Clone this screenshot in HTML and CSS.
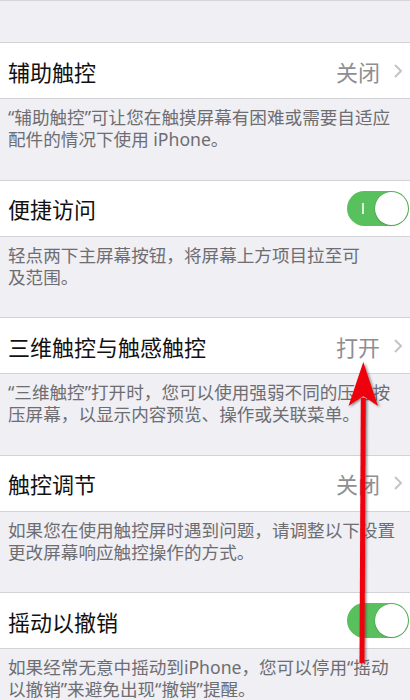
FILE: index.html
```html
<!DOCTYPE html>
<html lang="zh-CN">
<head>
<meta charset="utf-8">
<title>触控</title>
<link rel="stylesheet" href="styles.css">
</head>
<body>
<div class="page">
  <div class="top-gap"></div>

  <div class="row">
    <span class="title">辅助触控</span>
    <span class="value">关闭</span>
    <svg class="chev" viewBox="0 0 8 14"><path d="M1 1 L7 7 L1 13" /></svg>
  </div>
  <div class="foot">“辅助触控”可让您在触摸屏幕有困难或需要自适应<br>配件的情况下使用 iPhone。</div>

  <div class="row">
    <span class="title">便捷访问</span>
    <span class="toggle"><span class="mark"></span><span class="knob"></span></span>
  </div>
  <div class="foot">轻点两下主屏幕按钮，将屏幕上方项目拉至可<br>及范围。</div>

  <div class="row">
    <span class="title">三维触控与触感触控</span>
    <span class="value">打开</span>
    <svg class="chev" viewBox="0 0 8 14"><path d="M1 1 L7 7 L1 13" /></svg>
  </div>
  <div class="foot">“三维触控”打开时，您可以使用强弱不同的压力按<br>压屏幕，以显示内容预览、操作或关联菜单。</div>

  <div class="row">
    <span class="title">触控调节</span>
    <span class="value">关闭</span>
    <svg class="chev" viewBox="0 0 8 14"><path d="M1 1 L7 7 L1 13" /></svg>
  </div>
  <div class="foot">如果您在使用触控屏时遇到问题，请调整以下设置<br>更改屏幕响应触控操作的方式。</div>

  <div class="row">
    <span class="title">摇动以撤销</span>
    <span class="toggle"><span class="mark"></span><span class="knob"></span></span>
  </div>
  <div class="foot">如果经常无意中摇动到iPhone，您可以停用“摇动<br>以撤销”来避免出现“撤销”提醒。</div>

  <svg class="arrow" viewBox="0 0 410 700" width="410" height="700">
    <defs>
      <filter id="sh" x="-50%" y="-10%" width="200%" height="120%">
        <feDropShadow dx="1.5" dy="1" stdDeviation="1" flood-color="#333" flood-opacity="0.55"/>
      </filter>
    </defs>
    <g filter="url(#sh)" fill="#ee0008">
      <polygon points="360.8,398 365.8,398 364.5,663 359.5,663"/>
      <polygon points="363.3,362 378,406 363.3,396 348.5,406"/>
    </g>
  </svg>
</div>
</body>
</html>
```
FILE: styles.css
```css
html, body {
  margin: 0;
  padding: 0;
}
body {
  background: #efeff4;
  font-family: "Noto Sans", "Noto Sans CJK SC", sans-serif;
  width: 410px;
  height: 700px;
  overflow: hidden;
}
.page {
  position: relative;
  width: 410px;
  height: 700px;
  border-top: 1px solid #d6d6da;
  box-sizing: border-box;
}
.top-gap {
  height: 41px;
}
.row {
  box-sizing: border-box;
  height: 57px;
  background: #fff;
  border-top: 1px solid #d2d2d7;
  border-bottom: 1px solid #d2d2d7;
  display: flex;
  align-items: center;
  padding: 0 8px 0 8px;
}
.title {
  flex: 1;
  font-size: 22px;
  color: #111;
  white-space: nowrap;
}
.value {
  font-size: 22px;
  color: #8e8e93;
  margin-right: 14px;
}
.chev {
  width: 8px;
  height: 14px;
  fill: none;
  stroke: #c4c4c9;
  stroke-width: 2;
}
.foot {
  box-sizing: border-box;
  height: 80.5px;
  padding: 7px 8px 0 8px;
  font-size: 17.6px;
  line-height: 22px;
  color: #6d6d72;
  white-space: nowrap;
}
.toggle {
  position: relative;
  width: 62px;
  height: 35px;
  border-radius: 18px;
  background: #58c05c;
  margin-right: -7px;
}
.mark {
  position: absolute;
  left: 15px;
  top: 12px;
  width: 1.5px;
  height: 11px;
  background: rgba(255, 255, 255, 0.8);
}
.knob {
  position: absolute;
  right: 1px;
  top: 1px;
  width: 33px;
  height: 33px;
  border-radius: 50%;
  background: #fff;
  box-shadow: 0 0 0 0.5px rgba(0, 0, 0, 0.12), 0 1px 2px rgba(0, 0, 0, 0.12);
}
.arrow {
  position: absolute;
  left: 0;
  top: -1px;
  pointer-events: none;
}
```
